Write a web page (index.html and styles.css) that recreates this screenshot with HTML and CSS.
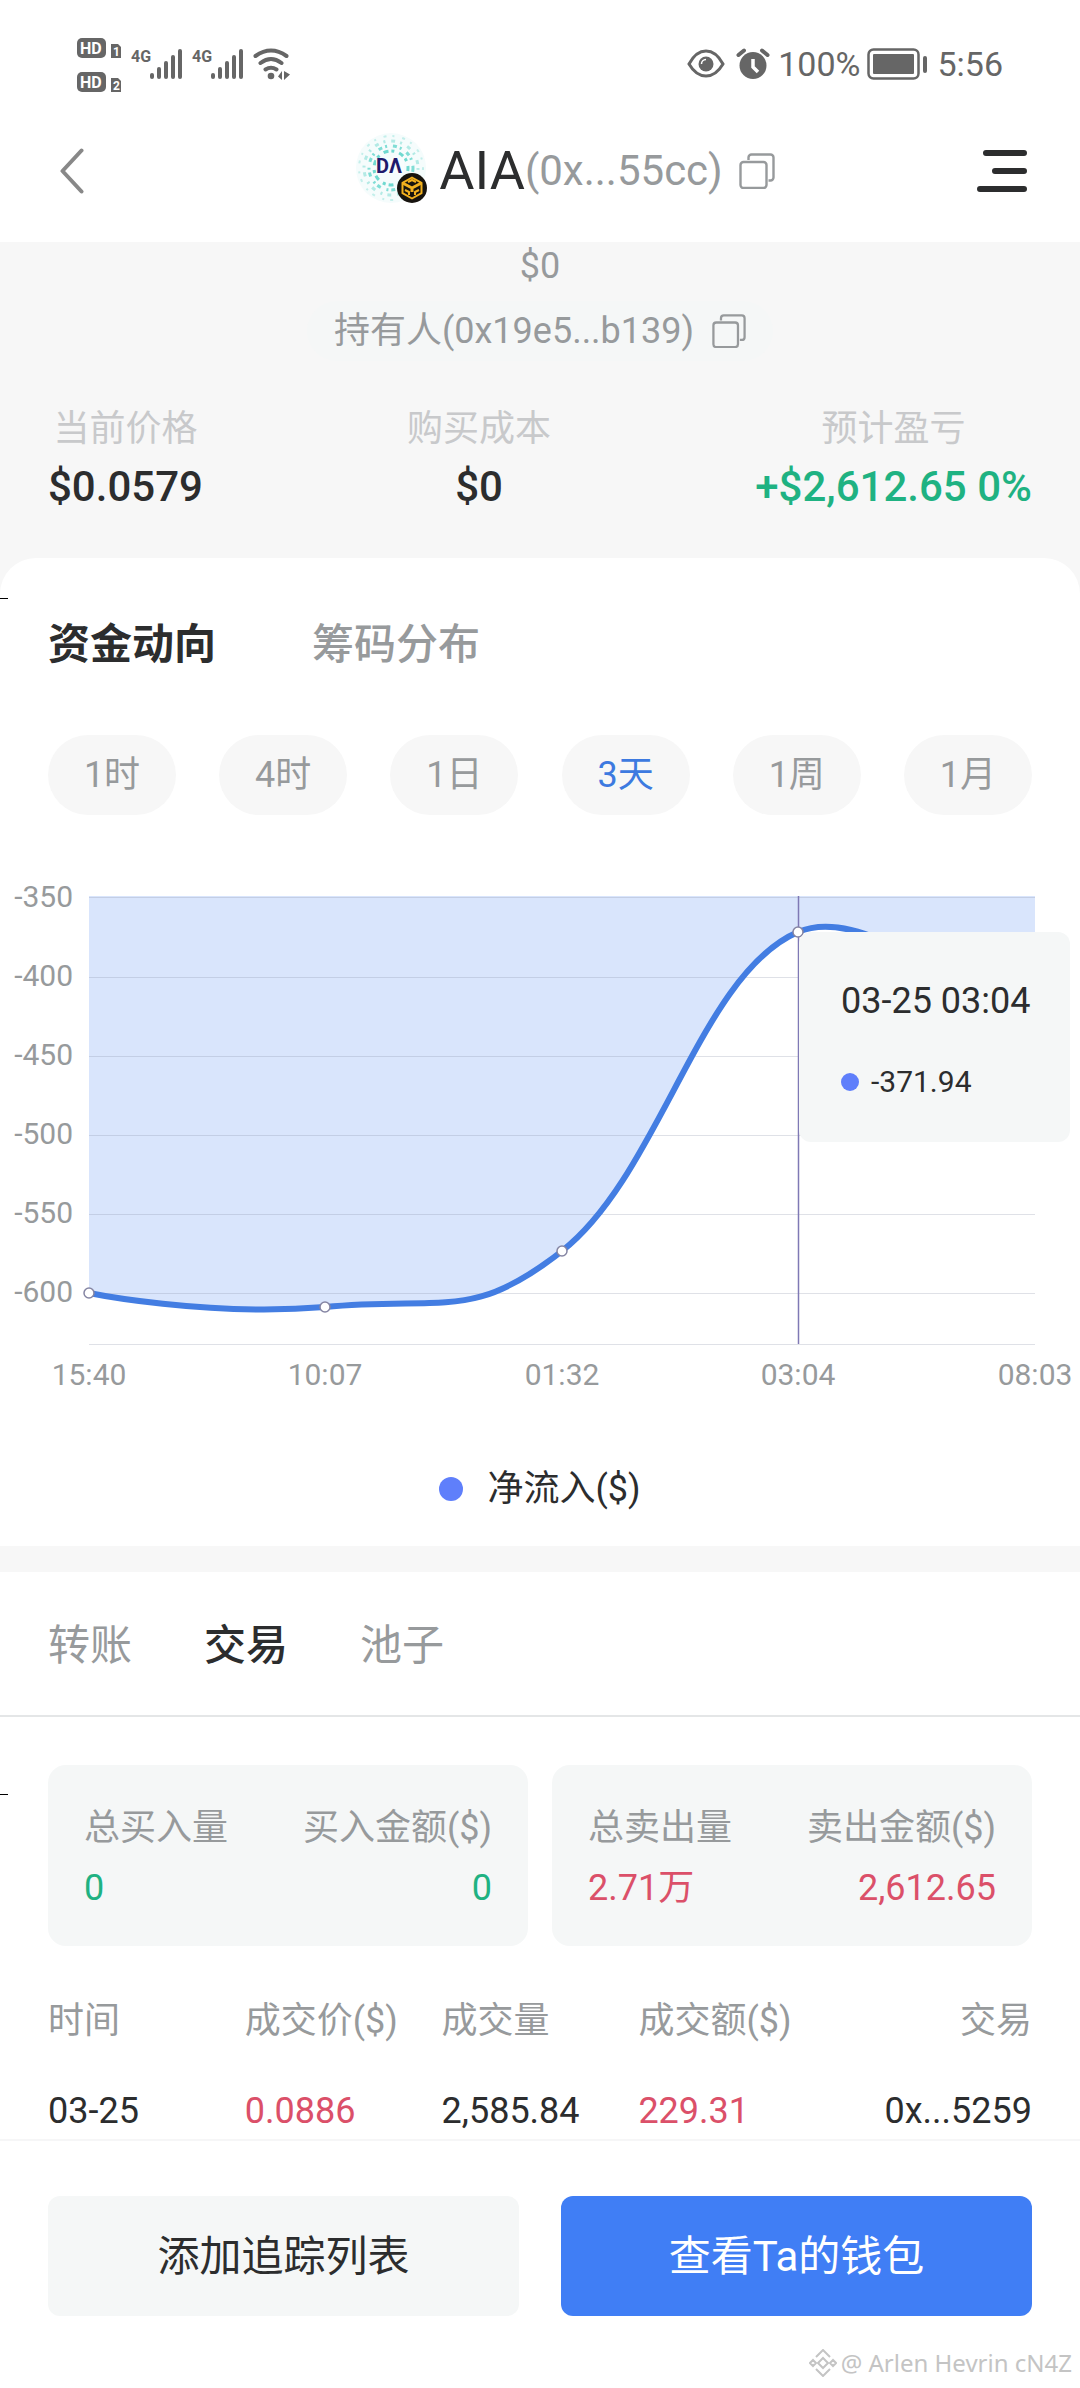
FILE: index.html
```html
<!DOCTYPE html>
<html lang="zh-CN">
<head>
<meta charset="utf-8">
<meta name="viewport" content="width=device-width, initial-scale=1">
<title>AIA 持有人</title>
<link rel="stylesheet" href="styles.css">
</head>
<body>
<svg class="defs" aria-hidden="true">
  <symbol id="copy" viewBox="0 0 36 36">
    <g fill="none" stroke="currentColor" stroke-width="2.4">
      <rect x="1.5" y="9" width="26" height="26" rx="3"/>
      <path d="M9.500 7V4.500a3 3 0 0 1 3-3H31.500a3 3 0 0 1 3 3V24.500a3 3 0 0 1-3 3H29.500"/>
    </g>
  </symbol>
</svg>
<div class="page">
  <div class="status">
    <svg class="status-left" viewBox="0 0 216 56" role="img" aria-label="信号">
      <g fill="#666">
        <rect x="0" y="2" width="29" height="20" rx="5"/>
        <path d="M34 8h7l3 3v11H34z"/>
        <rect x="0" y="36" width="29" height="20" rx="5"/>
        <path d="M34 42h7l3 3v11H34z"/>
        <g class="tiny"><text x="54" y="26">4G</text><text x="115" y="26">4G</text></g>
        <rect x="73" y="37" width="4" height="6" rx="2"/><rect x="80" y="31" width="4" height="12" rx="2"/><rect x="87" y="25" width="4" height="18" rx="2"/><rect x="94" y="19" width="4" height="24" rx="2"/><rect x="101" y="13" width="4" height="30" rx="2"/>
        <rect x="134" y="37" width="4" height="6" rx="2"/><rect x="141" y="31" width="4" height="12" rx="2"/><rect x="148" y="25" width="4" height="18" rx="2"/><rect x="155" y="19" width="4" height="24" rx="2"/><rect x="162" y="13" width="4" height="30" rx="2"/>
        <circle cx="194" cy="40" r="3.300"/>
        <path d="M205 35v9l-4-3.500zM207 35v9l6-5.500z"/>
      </g>
      <g fill="none" stroke="#666" stroke-width="4" stroke-linecap="round">
        <path d="M178.500 20Q194 9 209.500 20M183.500 27Q194 19 204.500 27M188.500 33.500Q194 30 199.500 33.500"/>
      </g>
      <g fill="#fff" class="tiny"><text x="3" y="18">HD</text><text x="3" y="52">HD</text></g>
      <g fill="#fff" class="micro"><text x="36" y="20">1</text><text x="36" y="54">2</text></g>
    </svg>
    <div class="status-right">
      <svg width="38" height="32" viewBox="0 0 38 32" aria-hidden="true">
        <path d="M2 16Q9 3 19 3T36 16Q29 28 19 28T2 16z" fill="none" stroke="#666" stroke-width="3"/>
        <circle cx="19" cy="16" r="7.500" fill="#666"/><path d="M14.500 16a4.500 4.500 0 0 1 4.500-4.500" fill="none" stroke="#fff" stroke-width="1.500"/>
      </svg>
      <svg width="34" height="32" viewBox="0 0 34 32" aria-hidden="true">
        <circle cx="17" cy="17.500" r="13.500" fill="#666"/>
        <path d="M17 11v8l5 5" fill="none" stroke="#fff" stroke-width="3.500"/>
        <path d="M2.500 7L8 2.500M31.500 7L26 2.500" stroke="#666" stroke-width="4" stroke-linecap="round"/>
      </svg>
      <span class="percent">100%</span>
      <svg width="62" height="32" viewBox="0 0 62 32" aria-hidden="true">
        <rect x="1.500" y="1.500" width="50" height="29" rx="5" fill="none" stroke="#666" stroke-width="2.500"/>
        <rect x="6" y="6" width="41" height="20" rx="1" fill="#666"/>
        <rect x="56" y="8" width="4" height="17" rx="2" fill="#666"/>
      </svg>
      <span>5:56</span>
    </div>
  </div>

  <header class="header">
    <button class="icon-button" aria-label="返回">
      <svg width="26" height="46" viewBox="0 0 26 46"><path d="M22.500 2.500L3.500 23l19 20.500" fill="none" stroke="#888" stroke-width="4" stroke-linecap="round" stroke-linejoin="round"/></svg>
    </button>
    <div class="title">
      <svg class="logo" viewBox="0 0 72 76" role="img" aria-label="AIA">
        <circle cx="36" cy="35" r="35" fill="#f5fcfc"/>
        <g fill="none" stroke="#4fd0c4">
          <circle cx="36" cy="35" r="17" stroke-width="3" stroke-dasharray="3 5 5 3" opacity=".8"/>
          <circle cx="36" cy="35" r="22" stroke-width="3" stroke-dasharray="4 3 2 6" opacity=".7"/>
          <circle cx="36" cy="35" r="27" stroke-width="3" stroke-dasharray="2 6 4 5" opacity=".4"/>
          <circle cx="36" cy="35" r="32" stroke-width="2" stroke-dasharray="2 8 3 6" opacity=".3"/>
        </g>
        <path d="M21 25h28v16H21z" fill="#f8fdfd"/>
        <text x="21" y="40" class="logo-text">DΛ</text>
        <circle cx="57" cy="55" r="15" fill="#17140f"/>
        <g fill="none" stroke="#f2b01e" stroke-width="2" stroke-linejoin="round">
          <path d="M57 44.500l9.500 5.300v10.400l-9.500 5.300-9.500-5.300V49.800z"/>
          <path d="M47.500 50l9.500 5 9.500-5M57 55v4" stroke-width="3"/>
          <path d="M50 57l4 2v3M64 57l-4 2v3M53 49l4-2 4 2"/>
        </g>
      </svg>
      <h1>AIA</h1><span class="address">(0x...55cc)</span>
      <button class="copy-large" aria-label="复制合约地址"><svg viewBox="0 0 36 36"><use href="#copy"/></svg></button>
    </div>
    <button class="icon-button menu" aria-label="菜单">
      <svg width="50" height="44" viewBox="0 0 50 44"><path d="M9 4h38M18 22h29M3 40h44" stroke="#2c2d2e" stroke-width="6" stroke-linecap="round"/></svg>
    </button>
  </header>

  <main class="content">
    <section class="summary">
      <p class="balance">$0</p>
      <div class="holder"><span>持有人(0x19e5...b139)</span>
        <button class="copy-small" aria-label="复制持有人地址"><svg viewBox="0 0 36 36"><use href="#copy"/></svg></button>
      </div>
      <dl class="stats">
        <div><dt>当前价格</dt><dd>$0.0579</dd></div>
        <div><dt>购买成本</dt><dd>$0</dd></div>
        <div><dt>预计盈亏</dt><dd class="gain">+$2,612.65 0%</dd></div>
      </dl>
    </section>

    <section class="trend">
      <nav class="tabs">
        <button class="active">资金动向</button>
        <button>筹码分布</button>
      </nav>
      <div class="ranges">
        <button>1时</button><button>4时</button><button>1日</button><button class="active">3天</button><button>1周</button><button>1月</button>
      </div>
      <div class="chart">
        <svg viewBox="0 0 1080 540" role="img" aria-label="净流入走势">
          <path d="M89 433C89 433 207 457 325 447C445 436 472 462 562 391C660 314 700 114 798 72C880 37 1035 190 1035 190V36H89z" fill="#d9e5fc"/>
          <g stroke="#8b93a8" stroke-opacity=".28" stroke-width="1">
            <path d="M89 37.500H1035M89 117.500H1035M89 196.500H1035M89 275.500H1035M89 354.500H1035M89 433.500H1035M89 484.500H1035"/>
          </g>
          <path d="M798.500 36V484" stroke="#7f79b5" stroke-width="1.500"/>
          <path d="M89 433C89 433 207 457 325 447C445 436 472 462 562 391C660 314 700 114 798 72C880 37 1035 190 1035 190" fill="none" stroke="#437de2" stroke-width="6"/>
          <g fill="#fff" stroke="#8585a3" stroke-width="1.500">
            <circle cx="89" cy="433" r="5"/><circle cx="325" cy="447" r="5"/><circle cx="562" cy="391" r="5"/><circle cx="798" cy="72" r="5"/>
          </g>
          <g class="axis" text-anchor="end">
            <text x="73" y="47">-350</text><text x="73" y="126">-400</text><text x="73" y="205">-450</text><text x="73" y="284">-500</text><text x="73" y="363">-550</text><text x="73" y="442">-600</text>
          </g>
          <g class="axis" text-anchor="middle">
            <text x="89" y="525">15:40</text><text x="325" y="525">10:07</text><text x="562" y="525">01:32</text><text x="798" y="525">03:04</text><text x="1035" y="525">08:03</text>
          </g>
        </svg>
        <div class="tooltip">
          <p class="tooltip-time">03-25 03:04</p>
          <p class="tooltip-value"><i class="dot"></i>-371.94</p>
        </div>
      </div>
      <p class="legend"><i class="dot"></i>净流入($)</p>
    </section>

    <section class="trades">
      <nav class="tabs">
        <button>转账</button>
        <button class="active">交易</button>
        <button>池子</button>
      </nav>
      <div class="totals">
        <dl class="total buy">
          <div><dt>总买入量</dt><dd>0</dd></div>
          <div><dt>买入金额($)</dt><dd>0</dd></div>
        </dl>
        <dl class="total sell">
          <div><dt>总卖出量</dt><dd>2.71万</dd></div>
          <div><dt>卖出金额($)</dt><dd>2,612.65</dd></div>
        </dl>
      </div>
      <table>
        <thead><tr><th>时间</th><th>成交价($)</th><th>成交量</th><th>成交额($)</th><th>交易</th></tr></thead>
        <tbody><tr><td>03-25</td><td class="loss">0.0886</td><td>2,585.84</td><td class="loss">229.31</td><td><a href="#tx">0x...5259</a></td></tr></tbody>
      </table>
    </section>
  </main>

  <footer class="actions">
    <button class="secondary">添加追踪列表</button>
    <button class="primary">查看Ta的钱包</button>
    <div class="watermark">
      <svg width="28" height="28" viewBox="0 0 28 28" aria-hidden="true"><g fill="none" stroke="#c4c4c4" stroke-width="2"><path d="M7 8l7-7 7 7M7 20l7 7 7-7M14 9l5 5-5 5-5-5z"/><path d="M4 11l-3 3 3 3 3-3zM24 11l-3 3 3 3 3-3z"/></g></svg>
      <span>@ Arlen Hevrin cN4Z</span>
    </div>
  </footer>
</div>
</body>
</html>
```
FILE: styles.css
```css
* { box-sizing: border-box; margin: 0; padding: 0; }
body {
  background: #fff;
  color: #2c2d2e;
  font-family: Roboto, "Noto Sans CJK SC", sans-serif;
  font-size: 36px;
  line-height: 48px;
}
button {
  border: 0;
  background: none;
  color: inherit;
  font: inherit;
  cursor: pointer;
}
a { color: inherit; text-decoration: none; }
svg { display: block; }
.defs { display: none; }

.page {
  display: flex;
  flex-direction: column;
  height: 100vh;
}

/* status bar */
.status {
  display: flex;
  flex-shrink: 0;
  justify-content: space-between;
  height: 100px;
  padding: 28px 77px 0;
  color: #666;
  font-size: 34px;
}
.status-left { width: 216px; height: 56px; margin-top: 8px; }
.status-right { display: flex; align-items: center; height: 72px; }
.status-right svg + svg { margin-left: 11px; }
.percent { margin: 0 7px 0 8px; }
.status-right span:last-child { margin-left: 8px; }
.tiny { font-size: 16px; font-weight: 700; }
.micro { font-size: 12px; font-weight: 700; }

/* title bar */
.header {
  display: flex;
  flex-shrink: 0;
  align-items: center;
  justify-content: space-between;
  height: 142px;
  padding: 0 53px 0 59px;
}
.icon-button { display: flex; width: 50px; }
.title {
  display: flex;
  align-items: center;
  padding-left: 44px;
}
.logo { width: 72px; height: 76px; margin-right: 12px; }
.logo-text { fill: #211a6b; font-size: 20px; font-weight: 700; }
h1 { font-size: 54px; font-weight: 400; line-height: 60px; }
.address { color: #979a9c; font-size: 42px; line-height: 60px; }
.copy-large { width: 36px; margin-left: 16px; color: #979a9c; }

.content {
  flex: 1;
  min-height: 0;
  overflow: hidden auto;
  scrollbar-width: none;
  background: #f7f7f7;
}

/* holder summary */
.summary { display: flex; flex-direction: column; padding-bottom: 41px; }
.balance { color: #979a9c; text-align: center; }
.holder {
  display: flex;
  align-self: center;
  align-items: center;
  gap: 18px;
  height: 60px;
  margin: 11px 0 44px;
  padding: 0 27px;
  border-radius: 30px;
  background: #f5f7f7;
  color: #979a9c;
}
.copy-small { width: 34px; }
.stats {
  display: flex;
  justify-content: space-between;
  padding: 0 48px;
  text-align: center;
}
dt { color: #979a9c; }
.stats dt { color: #c8c9cb; }
.stats dd { margin-top: 4px; font-size: 42px; font-weight: 500; line-height: 60px; }
.stats .gain { color: #1fb282; }

/* fund flow */
.trend, .trades { position: relative; background: #fff; }
.trend { padding: 57px 0 33px; border-radius: 36px 36px 0 0; }
.trend::before, .trades::before {
  content: "";
  position: absolute;
  left: 0;
  width: 8px;
  height: 1px;
  background: #000;
}
.trend::before { top: 40px; }
.trades::before { top: 222px; }
.tabs { display: flex; color: #979a9c; font-size: 42px; line-height: 60px; }
.trend .tabs { gap: 96px; padding: 0 48px; font-weight: 500; }
.tabs .active { color: #2c2d2e; }
.trend .active { font-weight: 700; }
.ranges {
  display: flex;
  justify-content: space-between;
  padding: 60px 48px 45px;
}
.ranges button {
  width: 128px;
  height: 80px;
  border-radius: 40px;
  background: #f7f7f7;
  color: #979a9c;
}
.ranges .active { color: #3d7ae0; font-weight: 400; }
.chart { position: relative; }
.chart svg { width: 100%; height: auto; }
.axis { fill: #979a9c; font-size: 30px; }
.tooltip {
  position: absolute;
  top: 72px;
  right: 10px;
  width: 271px;
  padding: 45px 0 36px 42px;
  border-radius: 12px;
  background: #f5f7f7;
}
.tooltip-value {
  display: flex;
  align-items: center;
  gap: 12px;
  margin-top: 33px;
  font-size: 30px;
}
.dot { width: 24px; height: 24px; border-radius: 50%; background: #5f7ffb; }
.tooltip .dot { width: 18px; height: 18px; }
.legend {
  display: flex;
  align-items: center;
  justify-content: center;
  gap: 24px;
  margin-top: 65px;
}

/* trades */
.trades { margin-top: 26px; }
.trades .tabs {
  align-items: center;
  gap: 72px;
  height: 145px;
  padding: 4px 48px 0;
  border-bottom: 2px solid #e4e6e7;
}
.trades .tabs .active { font-weight: 500; }
.totals {
  display: grid;
  grid-template-columns: 1fr 1fr;
  gap: 24px;
  padding: 48px 48px 30px;
}
.total {
  display: flex;
  justify-content: space-between;
  padding: 33px 36px 28px;
  border-radius: 18px;
  background: #f5f7f7;
  line-height: 60px;
}
.total div:last-child { text-align: right; }
.buy dd { color: #1fb282; }
.sell dd, .loss { color: #db5069; }
table {
  width: calc(100% - 96px);
  margin: 0 48px;
  border-collapse: collapse;
  table-layout: fixed;
}
th, td {
  height: 90px;
  font-weight: 400;
  text-align: left;
  white-space: nowrap;
}
th { color: #979a9c; }
th:last-child, td:last-child { text-align: right; }

/* bottom actions */
.actions {
  position: relative;
  display: grid;
  flex-shrink: 0;
  grid-template-columns: 1fr 1fr;
  gap: 42px;
  padding: 55px 48px 72px;
  border-top: 2px solid #f6f6f7;
  background: #fff;
}
.actions button {
  height: 120px;
  padding-top: 2px;
  border-radius: 12px;
  background: #f5f7f7;
  font-size: 42px;
}
.actions .primary { background: #407ef5; color: #fff; }
.watermark {
  position: absolute;
  right: 8px;
  bottom: 10px;
  display: flex;
  align-items: center;
  gap: 4px;
  color: #c4c4c4;
  font-family: "Noto Sans", sans-serif;
  font-size: 24px;
  line-height: 30px;
}
```
